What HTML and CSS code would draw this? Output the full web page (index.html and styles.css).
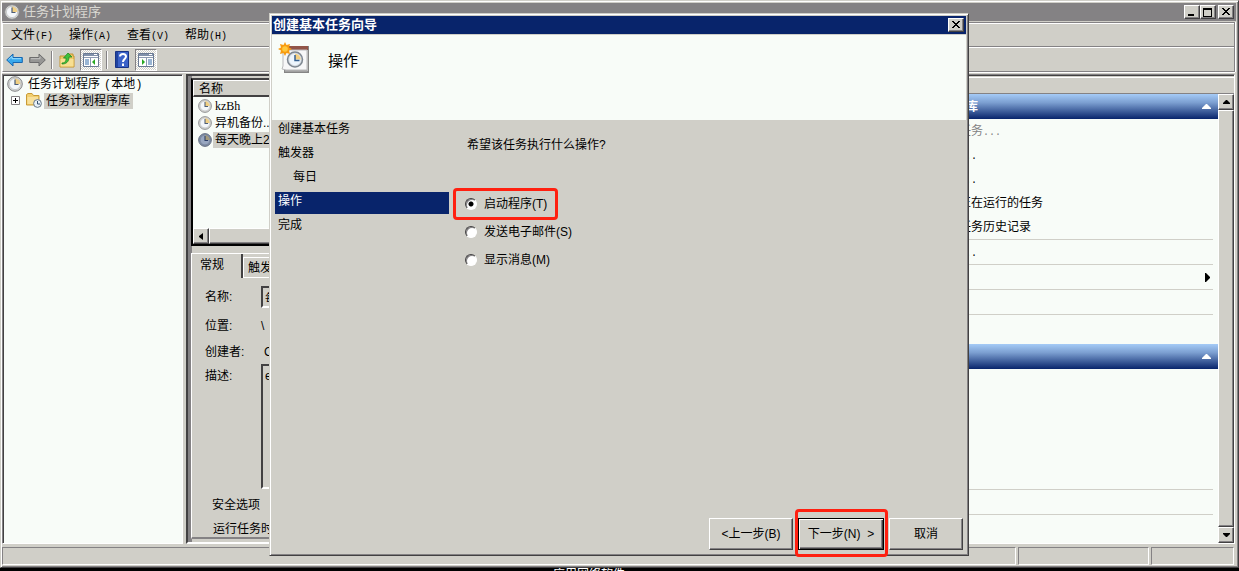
FILE: index.html
```html
<!DOCTYPE html>
<html lang="zh-CN">
<head>
<meta charset="utf-8">
<title>任务计划程序</title>
<link rel="stylesheet" href="styles.css">
</head>
<body>
<svg class="defs" aria-hidden="true">
  <symbol id="clock" viewBox="0 0 16 16">
    <circle cx="8" cy="8" r="7.3" fill="#d9d9d3" stroke="#85868a"/>
    <circle cx="8" cy="8" r="5.6" fill="#f4f7fa" stroke="#b9bcc0" stroke-width=".7"/>
    <path d="M8 8V2.6A5.4 5.4 0 0 1 13.4 8Z" fill="#f0cf84"/>
    <path d="M8 3.5V8.5H11.5" fill="none" stroke="#4c5d76" stroke-width="1.2"/>
  </symbol>
  <symbol id="clock-dark" viewBox="0 0 16 16">
    <circle cx="8" cy="8" r="7.3" fill="#8290a8" stroke="#5b6579"/>
    <circle cx="8" cy="8" r="5.6" fill="#98a6c0" stroke="#6c7890" stroke-width=".7"/>
    <path d="M8 8V2.6A5.4 5.4 0 0 1 13.4 8Z" fill="#a59b7c"/>
    <path d="M8 3.5V8.5H11.5" fill="none" stroke="#2b3d66" stroke-width="1.2"/>
  </symbol>
  <symbol id="cross" viewBox="0 0 10 8">
    <path d="M1 0h2v1h1v1h2V1h1V0h2v1H8v1H7v1H6v1h1v1h1v1h1v1H7V6H6V5H4v1H3v1H1V6h1V5h1V4h1V3H3V2H2V1H1z" fill="#000"/>
  </symbol>
</svg>

<main class="window">
  <header class="titlebar">
    <svg class="i16"><use href="#clock"/></svg>
    <h1>任务计划程序</h1>
    <div class="controls">
      <button class="ctl" aria-label="最小化"><svg width="10" height="8"><path d="M1 6h6v2H1z"/></svg></button>
      <button class="ctl" aria-label="最大化"><svg width="10" height="9"><path d="M0 0h9v9H0zM1 2v6h7V2z" fill-rule="evenodd"/></svg></button>
      <button class="ctl apart" aria-label="关闭"><svg width="10" height="8"><use href="#cross"/></svg></button>
    </div>
  </header>

  <div class="bars">
    <nav class="menu">
      <button>文件<span class="key">(F)</span></button>
      <button>操作<span class="key">(A)</span></button>
      <button>查看<span class="key">(V)</span></button>
      <button>帮助<span class="key">(H)</span></button>
    </nav>
    <div class="toolbar">
      <button class="tool" aria-label="后退"><svg width="17" height="16" viewBox="0 0 17 16"><path d="M.7 8 7 2v3.5h9.3v5H7V14z" fill="#38a8ec" stroke="#1766b0"/><path d="M2.5 7.7 6 4.5v2.2h9" fill="none" stroke="#9de0ff"/></svg></button>
      <button class="tool" aria-label="前进"><svg width="17" height="16" viewBox="0 0 17 16"><path d="M16.3 8 10 2v3.5H.7v5H10V14z" fill="#969694" stroke="#6d6d6d"/><path d="M2 6.7h9V4.5" fill="none" stroke="#c4c4c2"/></svg></button>
      <i class="sep"></i>
      <button class="tool" aria-label="向上"><svg width="16" height="16" viewBox="0 0 16 16"><path d="M1 4h7l1-2h5v2h1v11H1z" fill="#edc968" stroke="#c4942f"/><path d="M1.5 7h13v7.500h-13z" fill="#f7df91"/><path d="M3 11c4 0 4-3 4-5H4.500L9 1l4 4h-3c0 5-3 7-7 7z" fill="#3fc13a" stroke="#248a23" stroke-width=".8"/></svg></button>
      <button class="tool pressed" aria-label="显示控制台树"><svg width="16" height="14" viewBox="0 0 16 14"><path d="M.5.5h15v13H.5z" fill="#fff" stroke="#6a7a93"/><path d="M1 1h14v2H1z" fill="#8191aa"/><path d="M11 1.500h3" stroke="#fff"/><path d="M1 4.500h14M7.500 5v8" stroke="#8d9bb1"/><path d="M2 7h4M2 9h4M2 11h4" stroke="#356ca8"/><path d="M12 6v6L9 9z" fill="#28a822"/></svg></button>
      <i class="sep"></i>
      <button class="tool" aria-label="帮助"><svg width="14" height="17" viewBox="0 0 14 17"><path d="M.5.5h13v16H.5z" fill="#3b62c8" stroke="#173385"/><path d="M1 1h2v15H1z" fill="#20439f"/><path d="M5 5.500C5 2 11 2 11 5.500 11 8 8 8 8 11M8 12.500V15" fill="none" stroke="#fff" stroke-width="2"/></svg></button>
      <button class="tool pressed" aria-label="显示操作窗格"><svg width="16" height="14" viewBox="0 0 16 14"><path d="M.5.5h15v13H.5z" fill="#fff" stroke="#6a7a93"/><path d="M1 1h14v2H1z" fill="#8191aa"/><path d="M11 1.500h3" stroke="#fff"/><path d="M1 4.500h14M8.500 5v8" stroke="#8d9bb1"/><path d="M10 7h4M10 9h4M10 11h4" stroke="#356ca8"/><path d="M4 6v6l3-3z" fill="#28a822"/></svg></button>
    </div>
  </div>

  <div class="panes">
    <aside class="tree">
      <div class="node"><svg class="i16"><use href="#clock"/></svg><span>任务计划程序 <span class="paren">(</span>本地<span class="paren">)</span></span></div>
      <div class="node child">
        <svg width="9" height="9"><path d="M.5.5h8v8h-8z" fill="#fff" stroke="#848284"/><path d="M2 4.500h5M4.500 2v5" stroke="#000"/></svg>
        <svg class="folder" width="16" height="15" viewBox="0 0 16 15"><path d="M.5 1.500 2 .5h4l1.500 2H13V12H.5z" fill="#f2cf70" stroke="#c99a35"/><path d="M1.500 4H12v7H1.500z" fill="#f8e09a"/><circle cx="11.500" cy="10.500" r="3.900" fill="#e8f1f8" stroke="#687887"/><path d="M11.500 8v3H14" fill="none" stroke="#36506e"/></svg>
        <span class="picked">任务计划程序库</span>
      </div>
    </aside>

    <section class="center">
      <div class="list">
        <div class="list-head">名称</div>
        <div class="row"><svg class="i14"><use href="#clock"/></svg><span class="serif">kzBh</span></div>
        <div class="row"><svg class="i14"><use href="#clock"/></svg><span>异机备份...</span></div>
        <div class="row"><svg class="i14"><use href="#clock-dark"/></svg><span class="picked">每天晚上2点</span></div>
        <div class="hscroll"><button class="sbtn" aria-label="向左滚动"><svg width="4" height="7"><path d="M4 0v7L0 4V3z"/></svg></button><i class="thumb"></i></div>
      </div>
      <div class="detail">
        <div class="tabs"><button class="tab on">常规</button><button class="tab">触发器</button></div>
        <div class="form">
          <label for="t-name">名称:</label><input id="t-name" value="每天晚上">
          <span>位置:</span><span class="value">\</span>
          <span>创建者:</span><span class="value author">CN</span>
          <label for="t-desc" class="top">描述:</label><textarea id="t-desc">e</textarea>
        </div>
        <div class="security">安全选项</div>
        <div class="run-as">运行任务时</div>
      </div>
    </section>

    <aside class="actions">
      <div class="actions-cap"></div>
      <div class="actions-body">
        <div class="actions-list">
          <h2>任务计划程序库<svg width="9" height="5"><path d="M4 0h1l4 4v1H0V4z"/></svg></h2>
          <ul>
            <li class="off">创建基本任务<span class="dots">...</span></li>
            <li>创建任务<span class="dots">...</span></li>
            <li>导入任务<span class="dots">...</span></li>
            <li>显示所有正在运行的任务</li>
            <li class="rule">启用所有任务历史记录</li>
            <li class="rule">新文件夹<span class="dots">...</span></li>
            <li class="rule more"><svg width="5" height="9"><path d="M0 0h1l4 4v1L1 9H0z"/></svg></li>
            <li class="rule"></li>
          </ul>
          <h2><svg width="9" height="5"><path d="M4 0h1l4 4v1H0V4z"/></svg></h2>
          <ul>
            <li></li><li></li><li></li><li></li>
            <li class="rule"></li>
            <li class="rule"></li>
          </ul>
        </div>
        <div class="vscroll">
          <button class="sbtn" aria-label="向上滚动"><svg width="7" height="4"><path d="M3 0h1l3 3v1H0V3z"/></svg></button>
          <i class="thumb"></i>
          <button class="sbtn" aria-label="向下滚动"><svg width="7" height="4"><path d="M0 0h7v1L4 4H3L0 1z"/></svg></button>
        </div>
      </div>
    </aside>
  </div>

  <footer class="status"><span></span><span></span><span></span></footer>

  <form class="dialog">
    <header class="dialog-title"><h2>创建基本任务向导</h2><button type="button" class="ctl" aria-label="关闭"><svg width="10" height="8"><use href="#cross"/></svg></button></header>
    <div class="banner">
      <svg width="32" height="32" viewBox="0 0 32 32">
        <path d="M6 4h25v27H6z" fill="#858585"/>
        <path d="M7 4h23v4H7z" fill="#925548"/>
        <path d="M5 8h24v20H8l-4-1 1-3z" fill="#f7f7f8" stroke="#b9b9bb"/>
        <path d="M29.500 8v21H7" fill="none" stroke="#bdbdbd"/>
        <circle cx="17" cy="17.500" r="7.500" fill="#d5dae0" stroke="#7e8791" stroke-width="1.500"/>
        <circle cx="17" cy="17.500" r="5.700" fill="#edf5fd"/>
        <path d="M17 17.500v-5.700a5.700 5.700 0 0 1 5.700 5.700z" fill="#f4cf80"/>
        <path d="M17 13v5.500H21.500" fill="none" stroke="#345f91" stroke-width="1.500"/>
        <path d="m7 0 1.500 3L12 2l-1 3.500 3 1.500-3 1.500 1 3.500-3.500-1L7 14l-1.500-3L2 12l1-3.500L0 7l3-1.500L2 2l3.500 1z" fill="#f89b10"/>
        <circle cx="7" cy="7" r="2.800" fill="#ffc83c"/>
      </svg>
      <h3>操作</h3>
    </div>
    <div class="dialog-body">
      <ol class="steps">
        <li>创建基本任务</li>
        <li>触发器</li>
        <li class="sub">每日</li>
        <li class="current">操作</li>
        <li>完成</li>
      </ol>
      <fieldset class="choices">
        <legend>希望该任务执行什么操作?</legend>
        <label class="marked"><input type="radio" name="act" checked>启动程序(T)</label>
        <label><input type="radio" name="act">发送电子邮件(S)</label>
        <label><input type="radio" name="act">显示消息(M)</label>
      </fieldset>
    </div>
    <div class="buttons">
      <button type="button" class="btn">&lt;上一步(B)</button>
      <span class="marked wide"><button type="button" class="btn default">下一步(N) &nbsp;&gt;</button></span>
      <button type="button" class="btn small">取消</button>
    </div>
  </form>
</main>
<div class="caption">应用网络软件</div>
</body>
</html>
```

FILE: styles.css
```css
:root {
  --face: #d0cfc8;
  --paper: #f8fcf8;
  --shade: #848284;
  --dark: #424142;
  --navy: #08246b;
  --mark: #ff2010;
}

* { box-sizing: border-box; }

body {
  margin: 0;
  height: 100vh;
  display: flex;
  flex-direction: column;
  overflow: hidden;
  background: #000;
  color: #000;
  font: 12px/16px "Liberation Sans", "Noto Sans CJK SC", sans-serif;
}

h1, h2, h3, ul, ol { margin: 0; padding: 0; font-weight: normal; list-style: none; }
button, input, textarea { font: inherit; color: inherit; margin: 0; padding: 0; border-radius: 0; }
svg { display: block; flex: none; }
.defs { position: absolute; width: 0; height: 0; }
.i16 { width: 16px; height: 16px; }
.i14 { width: 14px; height: 14px; }

.window {
  position: relative;
  flex: 1;
  min-height: 0;
  display: flex;
  flex-direction: column;
  padding: 2px 2px 1px 1px;
  background: var(--face);
  border: 1px solid var(--face);
  border-right-color: var(--dark);
  border-bottom-color: var(--dark);
  box-shadow: inset 1px 1px #fff, inset -1px -1px var(--shade);
}

.titlebar {
  display: flex;
  align-items: center;
  gap: 3px;
  height: 18px;
  padding: 0 2px;
  background: var(--shade);
  color: #dad8d2;
}
.titlebar h1 { font-size: 13px; line-height: 18px; }
.controls { display: flex; margin-left: auto; }
.ctl, .sbtn {
  display: flex;
  align-items: center;
  justify-content: center;
  flex: none;
  background: var(--face);
  border: 1px solid;
  border-color: #fff var(--dark) var(--dark) #fff;
  box-shadow: inset -1px -1px var(--shade);
}
.ctl { width: 16px; height: 14px; }
.ctl.apart { margin-left: 2px; }

.bars {
  margin: 1px 1px 2px 0;
  border: 1px solid var(--shade);
  border-left-color: #fff;
  box-shadow: 0 1px #fff, 1px 0 #fff, inset 0 1px #fff;
}
.menu {
  display: flex;
  align-items: center;
  height: 24px;
  padding: 2px 0 0 8px;
  border-bottom: 1px solid var(--shade);
}
.menu button { width: 58px; border: 0; background: none; text-align: left; white-space: nowrap; }
.key { font: 10px/16px "Liberation Mono", monospace; }
.toolbar {
  display: flex;
  align-items: center;
  gap: 4px;
  height: 24px;
  padding-left: 2px;
  border-top: 1px solid #fff;
}
.tool { display: flex; align-items: center; justify-content: center; width: 19px; height: 22px; border: 0; background: none; }
.tool.pressed {
  width: 22px;
  border: 1px solid;
  border-color: var(--shade) #fff #fff var(--shade);
  background: repeating-conic-gradient(#fff 0 25%, var(--face) 0 50%) 0 0 / 2px 2px;
}
.sep { width: 2px; height: 18px; background: linear-gradient(90deg, var(--shade) 50%, #fff 50%); }

.panes {
  flex: 1;
  min-height: 0;
  display: grid;
  grid-template-columns: 182px minmax(0, 1fr) 355px;
  margin: 0 1px 2px 0;
}

.tree {
  padding: 0 0 0 3px;
  margin-right: 1px;
  background: var(--paper);
  border: 1px solid;
  border-color: var(--shade) #fff #fff var(--shade);
  box-shadow: inset 1px 1px var(--dark);
}
.node { display: flex; align-items: center; gap: 5px; height: 17px; white-space: nowrap; }
.node .i16 { margin-left: 1px; }
.child { padding-left: 5px; }
.child .folder { margin: 0 -1px 0 1px; }
.paren { display: inline-block; width: 8px; text-align: center; }
.picked { background: var(--face); padding: 0 3px 0 2px; margin-left: -2px; }

.center {
  display: flex;
  flex-direction: column;
  min-width: 0;
  margin-left: 2px;
  padding: 2px 0 3px 2px;
  background: linear-gradient(90deg, var(--shade) 4px, var(--face) 4px);
  border: 2px solid;
  border-color: var(--dark) var(--shade) #fff var(--dark);
}
.list {
  display: flex;
  flex-direction: column;
  height: 168px;
  margin-left: 1px;
  background: var(--paper);
  border: 2px solid #000;
  border-top-color: var(--dark);
}
.list-head {
  height: 17px;
  padding-left: 5px;
  background: var(--face);
  border: solid;
  border-width: 1px 0 2px 1px;
  border-color: #fff #fff var(--dark);
}
.row { display: flex; align-items: center; gap: 3px; height: 17px; padding-left: 5px; white-space: nowrap; }
.row .picked { margin-left: -2px; flex: 1; }
.serif { font-family: "Liberation Serif", serif; }
.hscroll { display: flex; height: 16px; margin-top: auto; }
.sbtn { width: 16px; height: 16px; }
.thumb {
  flex: 1;
  background: var(--face);
  border: 1px solid;
  border-color: #fff var(--dark) var(--dark) #fff;
  box-shadow: inset -1px -1px var(--shade);
}

.detail {
  flex: 1;
  min-height: 0;
  margin: 7px 0 0 1px;
  background: var(--face);
  border: solid #fff;
  border-width: 1px 0 0 1px;
  border-bottom: 2px solid var(--shade);
  overflow: hidden;
}
.tabs { display: flex; align-items: flex-end; height: 24px; }
.tab {
  width: 60px;
  height: 21px;
  padding-left: 4px;
  background: none;
  border: solid;
  border-width: 1px 0 1px 1px;
  border-color: #fff;
  text-align: left;
}
.tab.on { width: 51px; height: 24px; padding: 0 0 2px 8px; border-width: 0 2px 0 0; border-right-color: var(--dark); }
.form {
  display: grid;
  grid-template-columns: 56px 1fr;
  grid-template-rows: 22px 28px 16px 125px;
  row-gap: 4px;
  align-items: center;
  padding: 8px 0 0 13px;
}
.form label.top { align-self: start; padding-top: 4px; }
.form input, .form textarea {
  width: 100%;
  height: 100%;
  padding: 2px;
  background: var(--face);
  border: 2px solid;
  border-color: var(--dark) #fff #fff var(--dark);
  resize: none;
}
.form textarea { overflow: hidden; }
.author { padding-left: 3px; }
.security { padding: 8px 0 0 20px; }
.run-as { height: 22px; padding: 8px 0 0 21px; overflow: hidden; }

.actions {
  display: flex;
  flex-direction: column;
  min-width: 0;
  border: 1px solid;
  border-color: var(--shade) #fff #fff var(--shade);
  box-shadow: inset 0 1px var(--dark);
}
.actions-cap { height: 17px; margin-top: 2px; border: solid; border-width: 1px 0; border-color: #fff #fff var(--shade); }
.actions-body { flex: 1; min-height: 0; display: flex; background: var(--paper); }
.actions-list { flex: 1; min-width: 0; overflow: hidden; }
.actions h2 {
  display: flex;
  align-items: center;
  justify-content: space-between;
  height: 25px;
  padding: 0 7px 0 13px;
  background: linear-gradient(#a5cbf7, #7b9ed0 35%, var(--navy));
  color: #fff;
  font-size: 12px;
  font-weight: bold;
}
.actions h2 svg { fill: #fff; margin-left: auto; }
.actions ul + h2 { margin-top: 29px; }
.actions li { height: 24px; line-height: 24px; margin: 0 5px 0 0; padding-left: 30px; white-space: nowrap; }
.actions li.rule { height: 25px; border-bottom: 1px solid var(--face); }
.actions li.off { color: var(--shade); }
.actions li.more { display: flex; align-items: center; justify-content: flex-end; padding-right: 3px; }
.dots { font: 10px/16px "Liberation Mono", monospace; }
.vscroll { display: flex; flex-direction: column; width: 16px; background: var(--face); }

.status { display: grid; grid-template-columns: 1fr 131px 83px; gap: 2px; padding: 1px 2px 1px 0; }
.status span { height: 18px; border: 1px solid; border-color: var(--shade) #fff #fff var(--shade); }

.dialog {
  position: absolute;
  inset: 12px 269px 11px 268px;
  display: flex;
  flex-direction: column;
  padding: 2px;
  background: var(--face);
  border: 1px solid;
  border-color: var(--face) var(--dark) var(--dark) var(--face);
  box-shadow: inset 1px 1px #fff, inset -1px -1px var(--shade);
}
.dialog-title {
  display: flex;
  align-items: center;
  justify-content: space-between;
  height: 18px;
  padding: 0 2px 0 1px;
  background: var(--navy);
  color: #fff;
}
.dialog-title h2 { font-size: 13px; line-height: 18px; font-weight: bold; }
.banner {
  display: flex;
  align-items: flex-start;
  gap: 18px;
  height: 85px;
  margin-top: 1px;
  padding: 7px 6px;
  background: var(--paper);
}
.banner h3 { font-size: 15px; line-height: 38px; }
.dialog-body { flex: 1; display: flex; gap: 16px; }
.steps { width: 177px; padding-left: 3px; }
.steps li { height: 22px; margin-bottom: 2px; padding-left: 3px; line-height: 18px; }
.steps .sub { padding-left: 18px; }
.steps .current { background: var(--navy); color: #fff; }
.choices { display: flex; flex-direction: column; align-items: flex-start; gap: 12px; margin: 0; padding: 0; border: 0; }
.choices legend { padding: 17px 0 43px 2px; }
.choices label { display: flex; align-items: center; gap: 7px; }
.choices input {
  appearance: none;
  width: 12px;
  height: 12px;
  background: #fff;
  border: 1px solid;
  border-color: var(--dark) #fff #fff var(--dark);
  border-radius: 50%;
  box-shadow: inset 1px 1px var(--shade);
}
.choices input:checked { background: radial-gradient(circle, #000 2px, #fff 3px); }

.marked { position: relative; }
.marked::after {
  content: "";
  position: absolute;
  inset: -8px -11px -8px -12px;
  border: 3px solid var(--mark);
  border-radius: 4px;
  pointer-events: none;
}
.marked.wide::after { inset: -9px -4px -7px -3px; }

.buttons { display: flex; justify-content: flex-end; gap: 5px; padding: 0 3px 3px 0; }
.btn {
  width: 84px;
  height: 32px;
  background: var(--face);
  border: 1px solid;
  border-color: #fff var(--dark) var(--dark) #fff;
  box-shadow: inset -1px -1px var(--shade);
  white-space: nowrap;
}
.btn.default { width: 86px; border: 1px solid #000; box-shadow: inset 1px 1px #fff, inset -1px -1px var(--dark), inset -2px -2px var(--shade); }
.btn.small { width: 74px; }

.caption { flex: none; height: 3px; overflow: hidden; padding-left: 553px; color: #fff; line-height: 12px; }
```
